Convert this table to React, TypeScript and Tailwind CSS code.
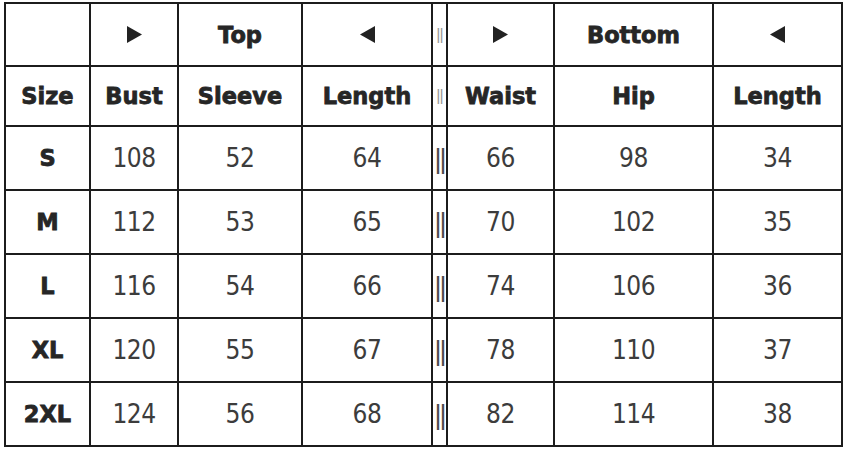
import React from "react";

const cols = "83px 86px 122px 128px 13px 105px 157px 127px";
const rows = "61px 58px 62px 62px 62px 62px 62px";

const head = "font-['DejaVu_Sans',sans-serif] font-bold text-[22.5px] text-[#262626] [-webkit-text-stroke:0.8px_#262626] pt-[2px]";
const data = "font-['DejaVu_Sans',sans-serif] [font-stretch:condensed] text-[26px] text-[#3c3c3c] tracking-[-0.5px]";
const sepHead = "font-['Liberation_Sans',sans-serif] text-[16px] text-[#999] tracking-[-1px]";
const sepData = "font-['Liberation_Sans',sans-serif] text-[27px] text-[#4a4a4a] tracking-[-2px] pt-[2px]";

function Right() {
  return (
    <svg width="15" height="17" viewBox="0 0 15 17">
      <polygon points="0,0 15,8.5 0,17" fill="#222" />
    </svg>
  );
}
function Left() {
  return (
    <svg width="15" height="17" viewBox="0 0 15 17">
      <polygon points="15,0 0,8.5 15,17" fill="#222" />
    </svg>
  );
}

function Cell({ children, cls = "" }: { children?: React.ReactNode; cls?: string }) {
  return <div className={`bg-white flex items-center justify-center ${cls}`}>{children}</div>;
}

const sizes = [
  ["S", "108", "52", "64", "66", "98", "34"],
  ["M", "112", "53", "65", "70", "102", "35"],
  ["L", "116", "54", "66", "74", "106", "36"],
  ["XL", "120", "55", "67", "78", "110", "37"],
  ["2XL", "124", "56", "68", "82", "114", "38"],
];

export default function App() {
  return (
    <div className="w-[844px] h-[449px] bg-white overflow-hidden">
      <div
        className="ml-[4px] mt-[2px] w-[839px] h-[445px] bg-[#1c1c1c] p-[2px] grid gap-[2px]"
        style={{ gridTemplateColumns: cols, gridTemplateRows: rows }}
      >
        <Cell />
        <Cell><Right /></Cell>
        <Cell cls={head}>Top</Cell>
        <Cell><Left /></Cell>
        <Cell cls={sepHead}>||</Cell>
        <Cell><Right /></Cell>
        <Cell cls={head}>Bottom</Cell>
        <Cell><Left /></Cell>

        <Cell cls={head}>Size</Cell>
        <Cell cls={head}>Bust</Cell>
        <Cell cls={head}>Sleeve</Cell>
        <Cell cls={head}>Length</Cell>
        <Cell cls={sepHead}>||</Cell>
        <Cell cls={head}>Waist</Cell>
        <Cell cls={head}>Hip</Cell>
        <Cell cls={head}>Length</Cell>

        {sizes.map((r) => (
          <React.Fragment key={r[0]}>
            <Cell cls={head}>{r[0]}</Cell>
            <Cell cls={data}>{r[1]}</Cell>
            <Cell cls={data}>{r[2]}</Cell>
            <Cell cls={data}>{r[3]}</Cell>
            <Cell cls={sepData}>||</Cell>
            <Cell cls={data}>{r[4]}</Cell>
            <Cell cls={data}>{r[5]}</Cell>
            <Cell cls={data}>{r[6]}</Cell>
          </React.Fragment>
        ))}
      </div>
    </div>
  );
}
